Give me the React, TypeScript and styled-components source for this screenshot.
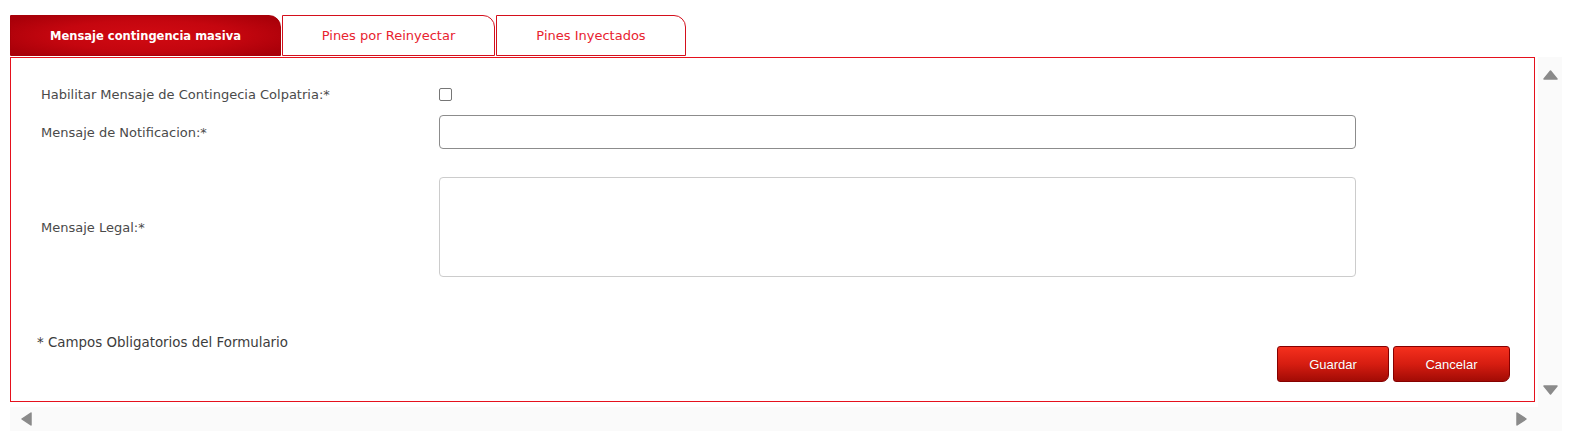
import React from "react";
import styled, { createGlobalStyle } from "styled-components";

const Global = createGlobalStyle`
  html, body { margin: 0; padding: 0; background: #ffffff; }
  body { font-family: "DejaVu Sans", Verdana, sans-serif; }
  * { box-sizing: border-box; }
`;

const Page = styled.div`
  padding: 15px 0 0 10px;
  width: 1569px;
  height: 436px;
`;

const TabBar = styled.div`
  display: flex;
  height: 41px;
  margin-bottom: 1px;
`;

const Tab = styled.div<{ $active?: boolean; $w: number }>`
  width: ${(p) => p.$w}px;
  height: 41px;
  margin-right: 1px;
  display: flex;
  align-items: center;
  justify-content: center;
  border: 1px solid #d40f1c;
  border-radius: 0 12px 0 0;
  font-size: ${(p) => (p.$active ? "11.5px" : "13px")};
  font-weight: ${(p) => (p.$active ? 700 : 400)};
  color: ${(p) => (p.$active ? "#ffffff" : "#e8232f")};
  background: ${(p) =>
    p.$active
      ? "radial-gradient(ellipse 60% 70% at 50% 50%, #d10a12 0%, #c5060f 55%, #a90009 100%)"
      : "#ffffff"};
  border-color: ${(p) => (p.$active ? "#a80008" : "#d40f1c")};
`;

const Frame = styled.div`
  display: grid;
  grid-template-columns: 1528px 24px;
  grid-template-rows: 350px 24px;
  width: 1552px;
  background: #fafafa;
`;

const Viewport = styled.div`
  background: #ffffff;
  padding: 0 3px 5px 0;
`;

const Panel = styled.div`
  height: 345px;
  border: 1px solid #e5111d;
  padding: 26px 24px 0 26px;
  display: flex;
  flex-direction: column;
`;

const Row = styled.div<{ $h: number; $mt?: number }>`
  display: grid;
  grid-template-columns: 398px 917px;
  align-items: center;
  height: ${(p) => p.$h}px;
  margin-top: ${(p) => p.$mt ?? 0}px;
  padding-left: 4px;
`;

const Label = styled.div`
  font-size: 13px;
  color: #4a4a4a;
`;

const Check = styled.span`
  width: 13px;
  height: 13px;
  border: 1px solid #767676;
  border-radius: 2px;
  background: #fff;
  display: block;
`;

const TextInput = styled.div`
  width: 917px;
  height: 34px;
  border: 1px solid #8c8c8c;
  border-radius: 4px;
  background: #fff;
`;

const TextArea = styled.div`
  width: 917px;
  height: 100px;
  border: 1px solid #cccccc;
  border-radius: 4px;
  background: #fff;
`;

const Footer = styled.div`
  display: flex;
  justify-content: space-between;
  align-items: flex-start;
  margin-top: 58px;
`;

const Note = styled.div`
  font-size: 13.4px;
  line-height: 16px;
  color: #3c3c3c;
`;

const Buttons = styled.div`
  display: flex;
  gap: 4px;
  margin-top: 11px;
`;

const Button = styled.button<{ $w: number }>`
  width: ${(p) => p.$w}px;
  height: 36px;
  border: 1px solid #860000;
  border-radius: 3px 3px 7px 3px;
  background: linear-gradient(to bottom, #f5301d 0%, #d61d11 50%, #a20b05 100%);
  color: #ffffff;
  font-family: "Liberation Sans", Arial, sans-serif;
  font-size: 13px;
  padding: 0;
  text-shadow: 0 0 1px rgba(0, 0, 0, 0.2);
`;

const VBar = styled.div`
  display: flex;
  flex-direction: column;
  justify-content: space-between;
  align-items: center;
  padding: 12px 0 11px;
`;

const HBar = styled.div`
  display: flex;
  justify-content: space-between;
  align-items: center;
  padding: 0 10px 0 10px;
`;

const Corner = styled.div``;

const Arrow = ({ dir }: { dir: "up" | "down" | "left" | "right" }) => {
  const pts: Record<string, string> = {
    up: "1,10 7.5,2 14,10",
    down: "1,1 14,1 7.5,9",
    left: "11,1 11,13 2,7",
    right: "1,1 1,13 10,7",
  };
  const vertical = dir === "up" || dir === "down";
  return (
    <svg width={vertical ? 15 : 12} height={vertical ? 11 : 14} viewBox={vertical ? "0 0 15 11" : "0 0 12 14"}>
      <polygon points={pts[dir]} fill="#8a8a8a" stroke="#8a8a8a" strokeWidth="1.5" strokeLinejoin="round" />
    </svg>
  );
};

export default function App() {
  return (
    <Page>
      <Global />
      <TabBar>
        <Tab $active $w={271}>Mensaje contingencia masiva</Tab>
        <Tab $w={213}>Pines por Reinyectar</Tab>
        <Tab $w={190}>Pines Inyectados</Tab>
      </TabBar>
      <Frame>
        <Viewport>
          <Panel>
            <Row $h={20}>
              <Label>Habilitar Mensaje de Contingecia Colpatria:*</Label>
              <Check />
            </Row>
            <Row $h={34} $mt={11}>
              <Label>Mensaje de Notificacion:*</Label>
              <TextInput />
            </Row>
            <Row $h={100} $mt={28}>
              <Label>Mensaje Legal:*</Label>
              <TextArea />
            </Row>
            <Footer>
              <Note>* Campos Obligatorios del Formulario</Note>
              <Buttons>
                <Button $w={112}>Guardar</Button>
                <Button $w={117}>Cancelar</Button>
              </Buttons>
            </Footer>
          </Panel>
        </Viewport>
        <VBar>
          <Arrow dir="up" />
          <Arrow dir="down" />
        </VBar>
        <HBar>
          <Arrow dir="left" />
          <Arrow dir="right" />
        </HBar>
        <Corner />
      </Frame>
    </Page>
  );
}
